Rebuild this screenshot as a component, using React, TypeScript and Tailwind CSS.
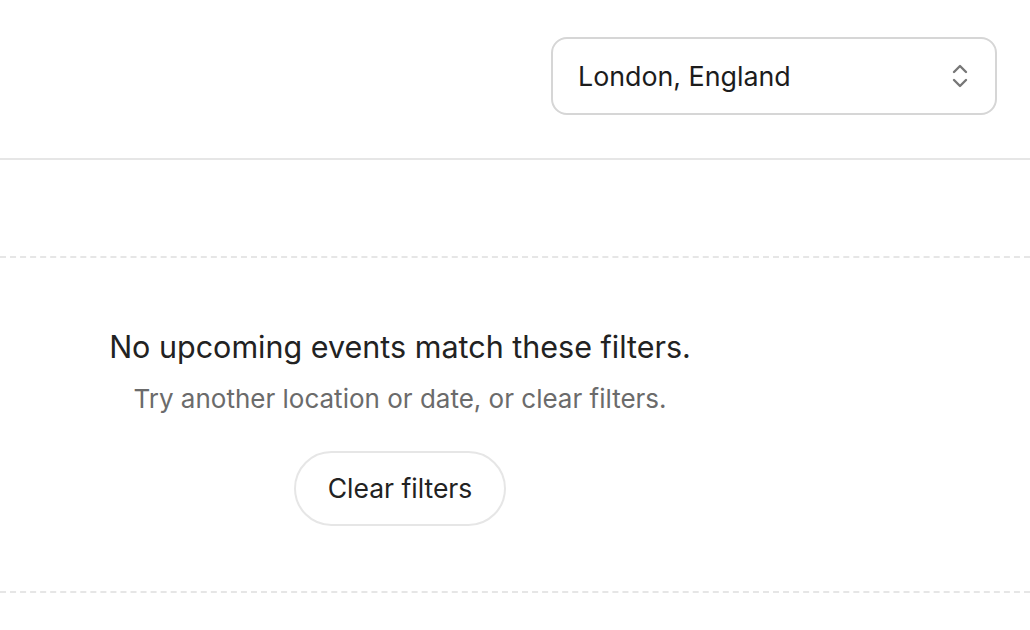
import React from "react";

function ChevronUpDown() {
  return (
    <svg width="18" height="26" viewBox="0 0 18 26" fill="none" stroke="#777" strokeWidth="2.4" strokeLinecap="round" strokeLinejoin="round">
      <path d="M3 9l6-6 6 6" />
      <path d="M3 17l6 6 6-6" />
    </svg>
  );
}

export default function App() {
  return (
    <div className="min-h-screen bg-white text-[#1f1f1f]" style={{ fontFamily: "Inter, 'Noto Sans', sans-serif" }}>
      <header className="h-[160px] flex justify-end items-start pt-[37px] pr-[33px] border-b-2 border-[#e6e6e6]">
        <button className="w-[446px] h-[78px] flex items-center justify-between pl-[25px] pr-[26px] rounded-[16px] border-2 border-[#d6d6d6] bg-white">
          <span className="text-[26.8px] text-[#1c1c1c]">London, England</span>
          <ChevronUpDown />
        </button>
      </header>

      <section className="mt-[96px] border-y-2 border-dashed border-[#e6e6e6]">
        <div className="w-[800px] flex flex-col items-center text-center pt-[71px] pb-[65px]">
          <h2 className="text-[30.5px] leading-[36px] font-normal text-[#222]">
            No upcoming events match these filters.
          </h2>
          <p className="mt-[18px] text-[26px] leading-[32px] text-[#6b6b6b]">
            Try another location or date, or clear filters.
          </p>
          <button className="mt-[36px] w-[212px] h-[75px] rounded-full border-2 border-[#e6e6e6] text-[26.5px] text-[#222] bg-white">
            Clear filters
          </button>
        </div>
      </section>
    </div>
  );
}
